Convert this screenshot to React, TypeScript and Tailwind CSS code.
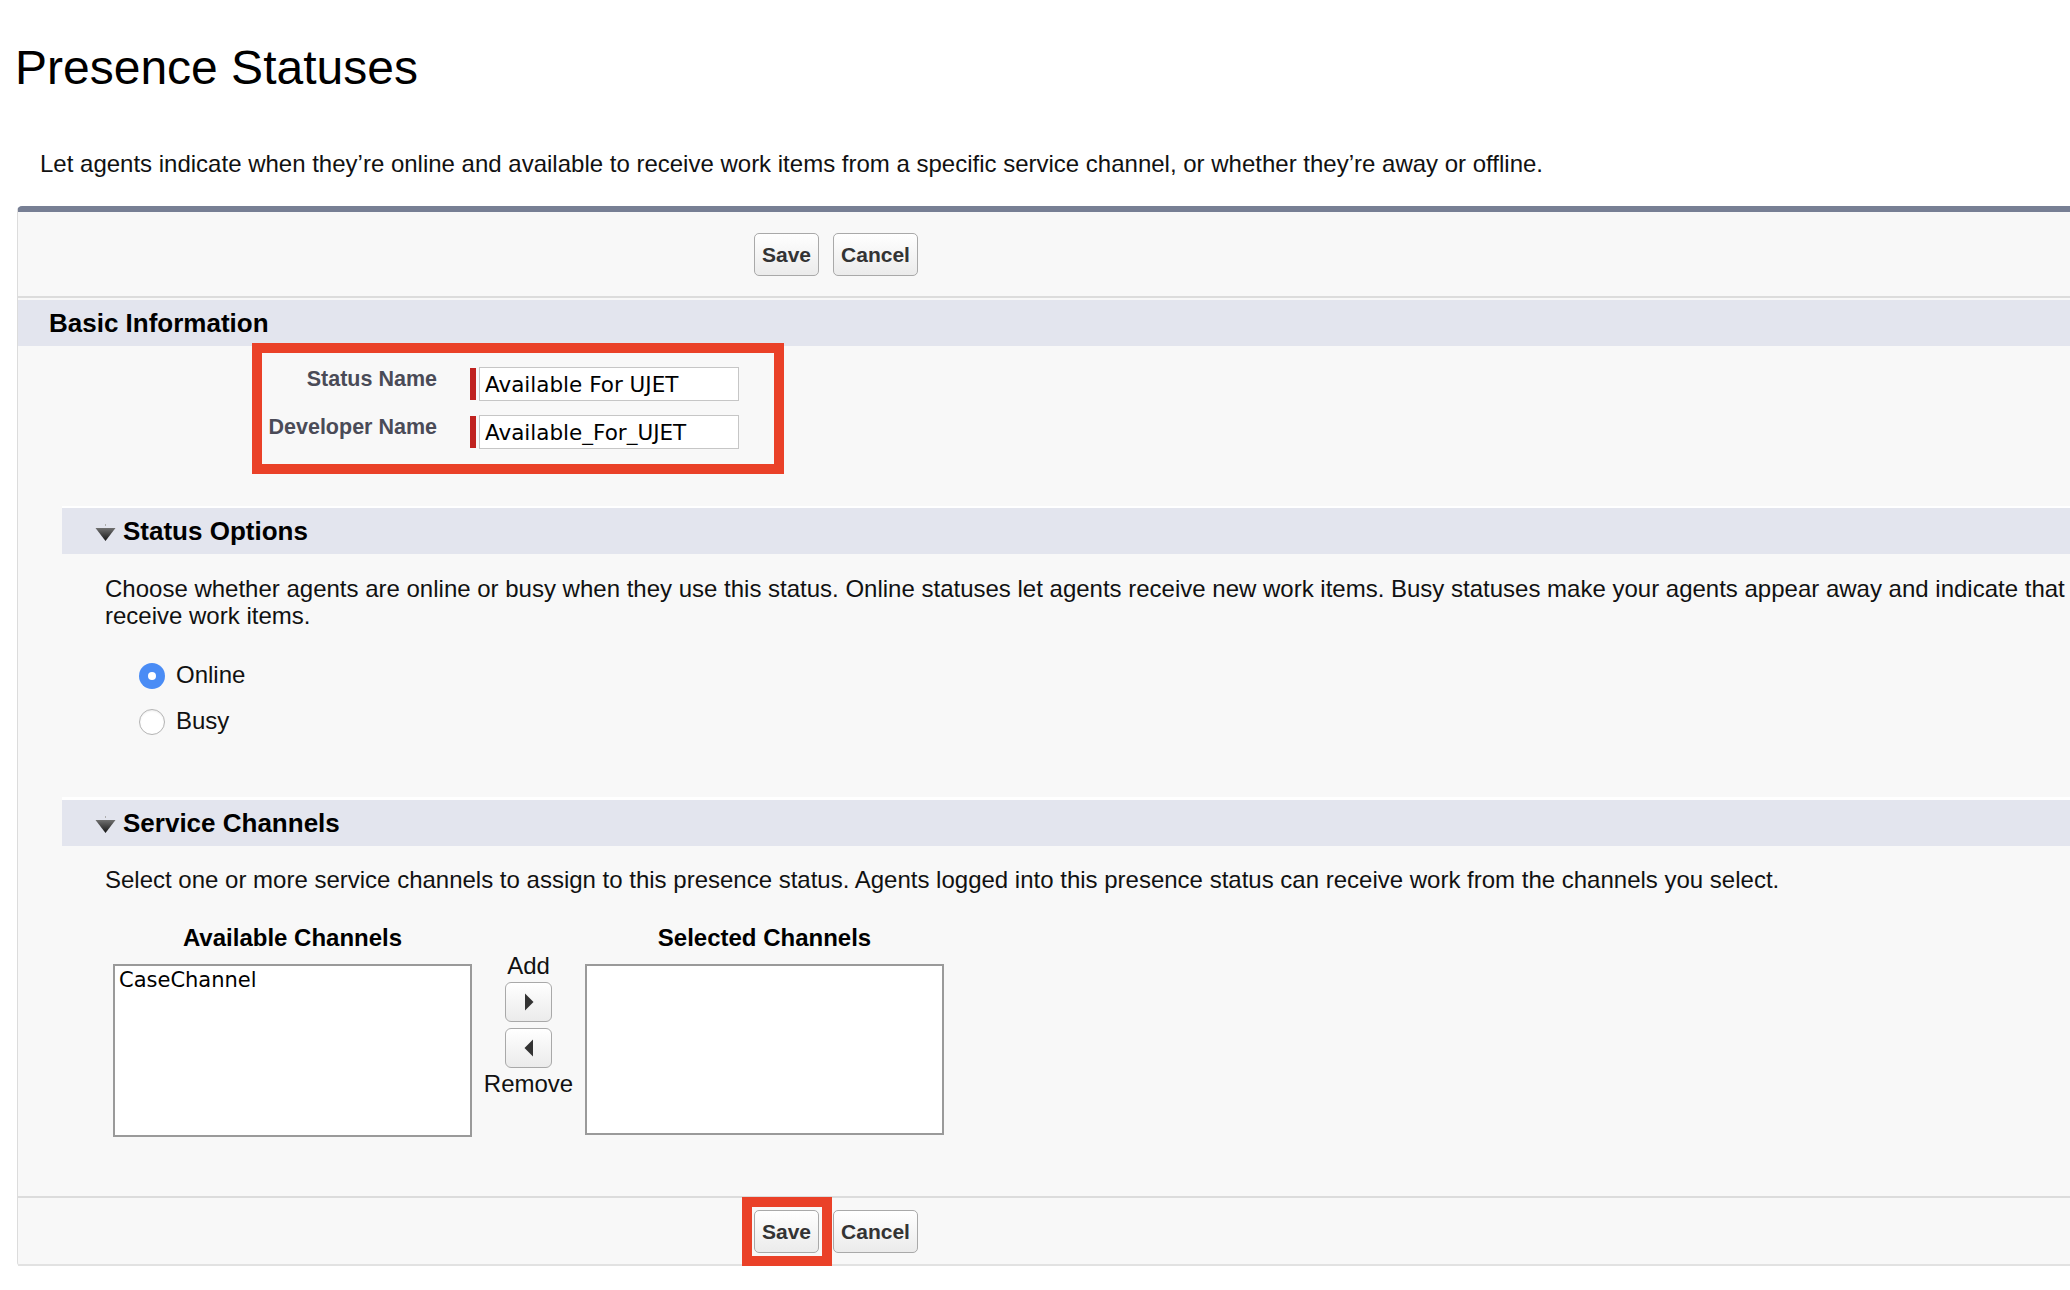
import React from "react";

// collapsible-section twist arrow (pointing down = expanded)
function Twist() {
  return (
    <svg width="21" height="18" viewBox="0 0 21 18" className="mt-[4px] shrink-0">
      <defs>
        <linearGradient id="twistFill" x1="0" y1="0" x2="0" y2="1">
          <stop offset="0" stopColor="#707070" />
          <stop offset="1" stopColor="#151515" />
        </linearGradient>
      </defs>
      <rect x="10" y="0" width="1" height="2" fill="#b0b0b0" />
      <polygon points="0.5,4 20.5,4 10.5,17" fill="url(#twistFill)" />
    </svg>
  );
}

function Btn({ label }: { label: string }) {
  return (
    <button className="h-[43px] px-[7px] border border-[#a9a9a9] rounded-[5px] bg-gradient-to-b from-white to-[#ebebeb] text-[21px] font-bold text-[#333] leading-none">
      {label}
    </button>
  );
}

function ArrowBtn({ dir }: { dir: "right" | "left" }) {
  return (
    <button className="w-[47px] h-[40px] border border-[#a9a9a9] rounded-[6px] bg-gradient-to-b from-white to-[#ebebeb] flex items-center justify-center">
      <svg width="10" height="18" viewBox="0 0 10 18">
        {dir === "right" ? (
          <polygon points="1,0.5 9.5,9 1,17.5" fill="#333" />
        ) : (
          <polygon points="9,0.5 0.5,9 9,17.5" fill="#333" />
        )}
      </svg>
    </button>
  );
}

function Radio({ checked, label }: { checked?: boolean; label: string }) {
  return (
    <label className="h-[46px] flex items-center gap-[11px]">
      {checked ? (
        <span className="w-[26px] h-[26px] rounded-full bg-[#4a8cf5] flex items-center justify-center">
          <span className="w-[8px] h-[8px] rounded-full bg-white" />
        </span>
      ) : (
        <span className="w-[26px] h-[26px] rounded-full bg-white border border-[#b4b4b4] shadow-[inset_0_1px_2px_rgba(0,0,0,0.08)]" />
      )}
      <span className="text-[24px] leading-[26px] pb-[3px]">{label}</span>
    </label>
  );
}

function FieldRow({ label, value }: { label: string; value: string }) {
  return (
    <div className="flex items-start">
      <div className="w-[175px] text-right text-[21.5px] leading-[24px] font-bold text-[#4a4b57]">{label}</div>
      <div className="ml-[33px] mt-[1px] w-[6px] h-[32px] bg-[#c0221f]" />
      <input
        readOnly
        value={value}
        className="ml-[3px] w-[260px] h-[34px] border border-[#c6c6c6] bg-white px-[5px] text-[21.5px] text-black font-['DejaVu_Sans',sans-serif] outline-none"
      />
    </div>
  );
}

function SectionHeader({ title, border }: { title: string; border: string }) {
  return (
    <div className={`${border} border-white`}>
      <div className="h-[46px] bg-[#e3e5ee] flex items-center pl-[33px] gap-[7px]">
        <Twist />
        <h3 className="text-[26px] font-bold leading-[46px] text-black">{title}</h3>
      </div>
    </div>
  );
}

export default function App() {
  return (
    <div className="w-[2070px] h-[1290px] overflow-hidden bg-white text-[#111] font-['Liberation_Sans',Arial,Helvetica,sans-serif]">
      <h1 className="pl-[15px] pt-[44px] text-[48px] leading-[48px] font-normal text-black">Presence Statuses</h1>
      <p className="mt-[58px] pl-[40px] text-[24px] leading-[28px]">
        Let agents indicate when they’re online and available to receive work items from a specific service channel, or whether they’re away or offline.
      </p>

      <div className="mt-[28px] ml-[17px] w-[2200px] bg-[#f8f8f8] border-t-[6px] border-t-[#777f94] border-l border-l-[#dcdcdc] rounded-tl-[5px] rounded-bl-[4px]">
        {/* top button row */}
        <div className="h-[86px] flex items-center pl-[736px] gap-[14px] border-b-2 border-b-[#dcdcdc]">
          <Btn label="Save" />
          <Btn label="Cancel" />
        </div>

        {/* basic information */}
        <div className="mt-[2px] h-[46px] bg-[#e3e5ee] pl-[31px]">
          <h3 className="text-[26px] font-bold leading-[46px] text-black">Basic Information</h3>
        </div>
        <div className="h-[160px] flex flex-col">
          <div className="relative ml-[234px] -mt-[3px] w-[532px] h-[131px] border-[10px] border-[#ea4128] pt-[14px] flex flex-col gap-[14px]">
            <FieldRow label="Status Name" value="Available For UJET" />
            <FieldRow label="Developer Name" value="Available_For_UJET" />
          </div>
        </div>

        <div className="ml-[44px]">
          {/* status options */}
          <SectionHeader title="Status Options" border="border-t-2" />
          <div className="pl-[43px] pt-[21px] pb-[52px]">
            <p className="text-[24px] leading-[27px] whitespace-nowrap">
              Choose whether agents are online or busy when they use this status. Online statuses let agents receive new work items. Busy statuses make your agents appear away and indicate that they can’t
              <br />
              receive work items.
            </p>
            <div className="mt-[24px] ml-[34px]">
              <Radio checked label="Online" />
              <Radio label="Busy" />
            </div>
          </div>

          {/* service channels */}
          <SectionHeader title="Service Channels" border="border-t-[3px]" />
          <div className="pl-[43px] pt-[20px] pb-[59px]">
            <p className="text-[24px] leading-[27px]">
              Select one or more service channels to assign to this presence status. Agents logged into this presence status can receive work from the channels you select.
            </p>
            <div className="mt-[32px] ml-[8px] flex items-start">
              <div className="w-[359px] flex flex-col items-center">
                <div className="text-[24px] leading-[26px] font-bold text-black">Available Channels</div>
                <div className="mt-[13px] w-full h-[173px] border-2 border-[#9a9a9a] bg-white pl-[4px] pt-[2px] text-[21px] leading-[24px] text-black font-['DejaVu_Sans',sans-serif]">
                  CaseChannel
                </div>
              </div>
              <div className="w-[113px] pt-[28px] flex flex-col items-center">
                <div className="text-[24px] leading-[26px]">Add</div>
                <div className="mt-[3px]">
                  <ArrowBtn dir="right" />
                </div>
                <div className="mt-[6px]">
                  <ArrowBtn dir="left" />
                </div>
                <div className="mt-[3px] text-[24px] leading-[26px]">Remove</div>
              </div>
              <div className="w-[359px] flex flex-col items-center">
                <div className="text-[24px] leading-[26px] font-bold text-black">Selected Channels</div>
                <div className="mt-[13px] w-full h-[171px] border-2 border-[#9a9a9a] bg-white" />
              </div>
            </div>
          </div>
        </div>

        {/* bottom button row */}
        <div className="h-[70px] flex items-center pl-[736px] gap-[14px] border-t-2 border-t-[#dcdcdc] border-b-2 border-b-[#e2e2e2]">
          <div className="relative">
            <Btn label="Save" />
            <div className="absolute -left-[12px] -right-[13px] -top-[13px] -bottom-[13px] border-[10px] border-[#ea4128]" />
          </div>
          <Btn label="Cancel" />
        </div>
      </div>
    </div>
  );
}
